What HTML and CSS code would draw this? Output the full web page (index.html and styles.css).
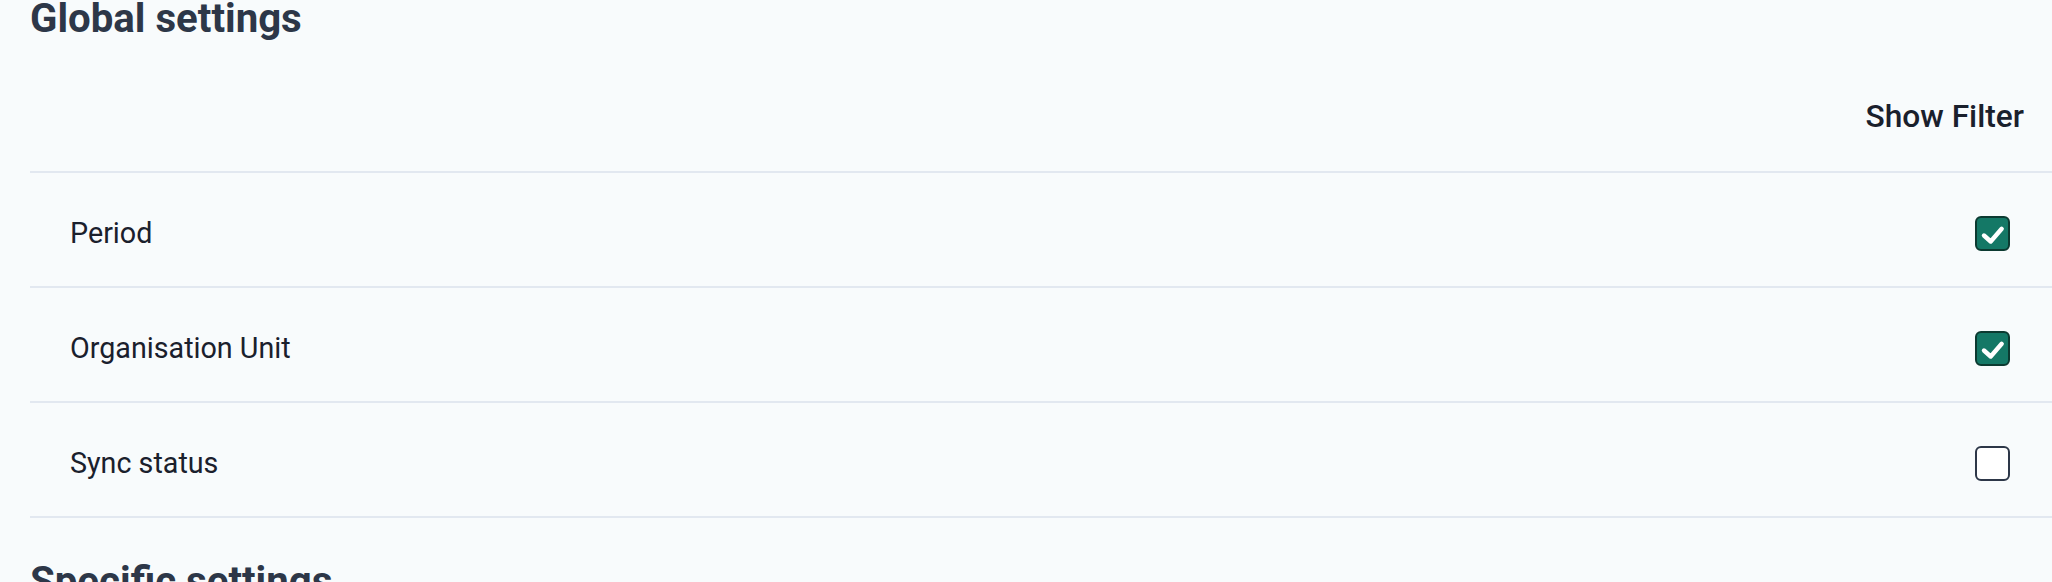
FILE: index.html
```html
<!DOCTYPE html>
<html lang="en">
<head>
<meta charset="utf-8">
<title>Settings</title>
<link rel="stylesheet" href="styles.css">
</head>
<body>
<main class="page">
  <h2 class="section-title">Global settings</h2>
  <div class="settings-table">
    <div class="table-head">
      <span class="head-cell">Show Filter</span>
    </div>
    <div class="table-row">
      <span class="row-label">Period</span>
      <span class="checkbox checkbox-checked">
        <svg viewBox="0 0 31 31" width="31" height="31"><path d="M7 17.5 L13.7 23.5 L24.7 10.8" fill="none" stroke="#ffffff" stroke-width="4.4" stroke-linecap="round" stroke-linejoin="round"/></svg>
      </span>
    </div>
    <div class="table-row">
      <span class="row-label">Organisation Unit</span>
      <span class="checkbox checkbox-checked">
        <svg viewBox="0 0 31 31" width="31" height="31"><path d="M7 17.5 L13.7 23.5 L24.7 10.8" fill="none" stroke="#ffffff" stroke-width="4.4" stroke-linecap="round" stroke-linejoin="round"/></svg>
      </span>
    </div>
    <div class="table-row">
      <span class="row-label">Sync status</span>
      <span class="checkbox"></span>
    </div>
  </div>
  <h2 class="section-title section-title-next">Specific settings</h2>
</main>
</body>
</html>
```

FILE: styles.css
```css
html, body {
  margin: 0;
  padding: 0;
  background: #f8fbfc;
  overflow: hidden;
}

.page {
  padding-left: 30px;
  font-family: Roboto, "Liberation Sans", sans-serif;
}

.section-title {
  margin: 0 0 24px 0;
  font-size: 40.2px;
  line-height: 37px;
  font-weight: 700;
  color: #2d3748;
}

.section-title-next {
  margin-top: 45px;
}

.settings-table {
  display: flex;
  flex-direction: column;
}

.table-head {
  display: flex;
  justify-content: flex-end;
  padding: 37px 28px 36px 0;
  border-bottom: 2px solid #e2e8f0;
}

.head-cell {
  font-size: 31.7px;
  line-height: 37px;
  font-weight: 500;
  color: #1a202c;
}

.table-row {
  display: flex;
  align-items: center;
  justify-content: space-between;
  padding: 43px 42px 35px 40px;
  border-bottom: 2px solid #e2e8f0;
}

.row-label {
  font-size: 28.7px;
  line-height: 35px;
  color: #1a202c;
}

.checkbox {
  box-sizing: border-box;
  width: 35px;
  height: 35px;
  border: 2px solid #2d3748;
  border-radius: 6px;
  background: #ffffff;
  display: flex;
}

.checkbox-checked {
  background: #147866;
  border-color: #0c3a31;
}

.checkbox svg {
  display: block;
}
```
